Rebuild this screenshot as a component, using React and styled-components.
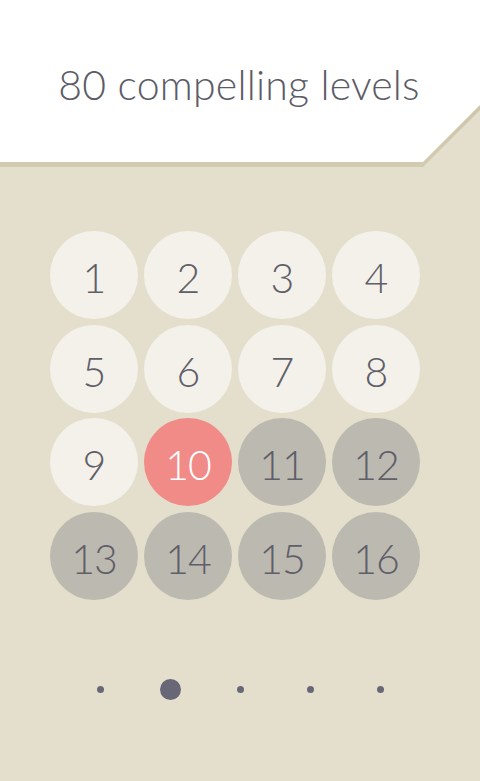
import React from 'react'
import styled, {createGlobalStyle} from 'styled-components'

const GlobalStyle = createGlobalStyle`
    html, body {
        margin: 0;
        padding: 0;
        background: #e4dfcc;
    }
`

const Screen = styled.div`
    width: 480px;
    height: 781px;
    background: #e4dfcc;
    font-family: Lato, "Open Sans", sans-serif;
    overflow: hidden;
`

const HeaderShadow = styled.header`
    height: 167px;
    background: linear-gradient(#c4bc9c, #d2cbb0);
    clip-path: polygon(0 0, 100% 0, 100% 110px, 423px 167px, 0 167px);
`

const HeaderPanel = styled.div`
    height: 162px;
    background: #ffffff;
    clip-path: polygon(0 0, 100% 0, 100% 105px, 423px 162px, 0 162px);
    display: flex;
    align-items: center;
    justify-content: center;
    padding-right: 2px;
    box-sizing: border-box;
`

const Title = styled.h1`
    margin: 0 0 -6px;
    font-size: 41px;
    font-weight: 300;
    color: #5c5b66;
    letter-spacing: 0.2px;
`

const Grid = styled.div`
    display: grid;
    grid-template-columns: repeat(4, 88px);
    column-gap: 6px;
    row-gap: 5.5px;
    padding: 64px 0 0 50px;
`

const fills = {
    done: '#f3f1ea',
    current: '#f08b88',
    locked: '#bcb9b0'
}

const Level = styled.div`
    width: 88px;
    height: 88px;
    box-sizing: border-box;
    padding-top: 5px;
    border-radius: 50%;
    background: ${props => fills[props.state]};
    color: ${props => (props.state === 'current' ? '#ffffff' : '#5f5e69')};
    display: flex;
    align-items: center;
    justify-content: center;
    font-size: 41px;
    font-weight: 300;
    letter-spacing: -1px;
`

const Pager = styled.div`
    display: flex;
    padding: 79px 0 0 65px;
`

const DotCell = styled.div`
    width: 70px;
    height: 21px;
    display: flex;
    align-items: center;
    justify-content: center;
`

const Dot = styled.span`
    width: ${props => (props.active ? '21px' : '7px')};
    height: ${props => (props.active ? '21px' : '7px')};
    border-radius: 50%;
    background: #686777;
`

const levels = Array.from({length: 16}, (_, i) => i + 1)
const stateOf = n => (n < 10 ? 'done' : n === 10 ? 'current' : 'locked')

export default function App() {
    return (
        <Screen>
            <GlobalStyle />
            <HeaderShadow>
                <HeaderPanel>
                    <Title>80 compelling levels</Title>
                </HeaderPanel>
            </HeaderShadow>
            <Grid>
                {levels.map(n => (
                    <Level key={n} state={stateOf(n)}>{n}</Level>
                ))}
            </Grid>
            <Pager>
                {[0, 1, 2, 3, 4].map(i => (
                    <DotCell key={i}><Dot active={i === 1} /></DotCell>
                ))}
            </Pager>
        </Screen>
    )
}
